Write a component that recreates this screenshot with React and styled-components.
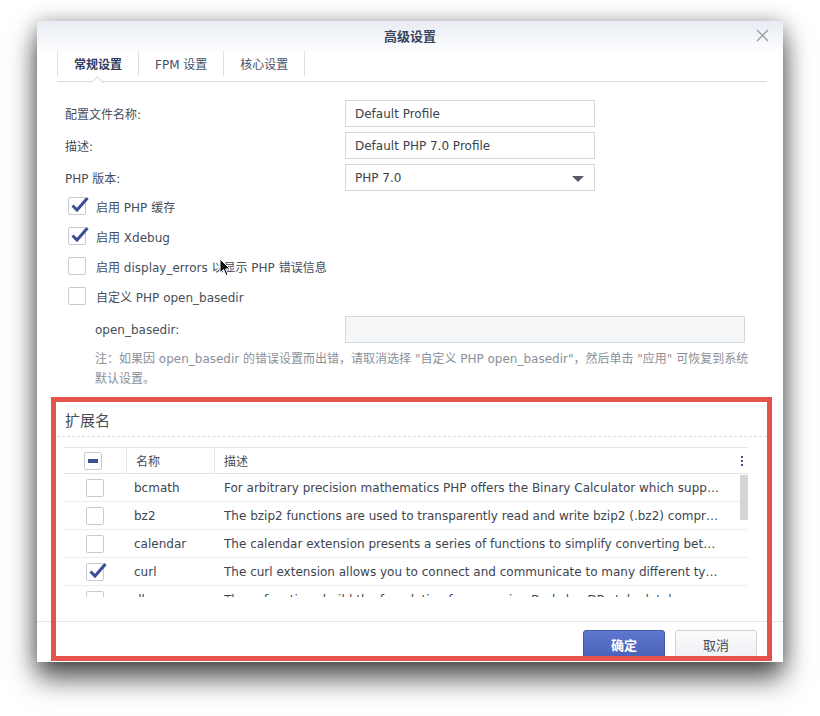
import React from "react";
import styled, { createGlobalStyle } from "styled-components";

const GlobalStyle = createGlobalStyle`
  html, body {
    margin: 0;
    padding: 0;
    background: #ffffff;
  }
  body {
    font-family: "DejaVu Sans", "Noto Sans CJK SC", sans-serif;
    font-size: 12px;
    color: #464e5c;
  }
`;

const Stage = styled.div`
  position: relative;
  width: 820px;
  height: 716px;
  overflow: hidden;
  padding: 21px 37px 0 37px;
  box-sizing: border-box;
`;

const Dialog = styled.div`
  width: 746px;
  height: 641px;
  background: #fff;
  display: flex;
  flex-direction: column;
  overflow: hidden;
  box-shadow: 0 16px 26px rgba(0, 0, 0, 0.68), 0 0 18px rgba(0, 0, 0, 0.25);
`;

const TitleBar = styled.div`
  position: relative;
  height: 29px;
  display: flex;
  align-items: center;
  justify-content: center;
  background: linear-gradient(#e8ecf3, #fbfcfd);
  font-size: 13px;
  font-weight: bold;
  color: #3a4560;
`;

const Close = styled.svg`
  position: absolute;
  right: 14px;
  top: 8px;
`;

const TabBar = styled.div`
  display: flex;
  height: 32px;
  margin: 0 16px 0 20px;
  border-bottom: 1px solid #d6dae1;
  align-items: flex-start;
  box-sizing: border-box;
`;

const Tab = styled.div`
  position: relative;
  height: 25px;
  margin-top: 1px;
  display: flex;
  align-items: center;
  padding: 0 ${p => p.$pad}px;
  border-left: 1px solid #dde0e5;
  font-weight: ${p => (p.$active ? "bold" : "normal")};
  color: ${p => (p.$active ? "#2f3b63" : "#47506a")};
  &:last-child {
    border-right: 1px solid #dde0e5;
  }
  ${p =>
    p.$active &&
    `
    &::after {
      content: "";
      position: absolute;
      left: 50%;
      bottom: -11px;
      width: 8px;
      height: 8px;
      margin-left: -5px;
      background: #fff;
      border-left: 1px solid #d6dae1;
      border-top: 1px solid #d6dae1;
      transform: rotate(45deg);
    }
  `}
`;

const Form = styled.div`
  padding: 18px 0 0 28px;
  display: flex;
  flex-direction: column;
`;

const FieldRow = styled.div`
  display: flex;
  align-items: center;
  height: 27px;
  margin-bottom: ${p => p.$mb ?? 5}px;
  margin-top: ${p => p.$mt ?? 0}px;
`;

const Label = styled.div`
  width: ${p => p.$w || 280}px;
  padding-left: ${p => p.$indent || 0}px;
  box-sizing: border-box;
`;

const Input = styled.div`
  width: ${p => p.$w || 250}px;
  height: 27px;
  box-sizing: border-box;
  border: 1px solid #d3d7de;
  background: ${p => (p.$disabled ? "#f5f6f8" : "#fff")};
  display: flex;
  align-items: center;
  padding: 0 9px;
  color: #3c424c;
  position: relative;
`;

const Caret = styled.div`
  position: absolute;
  right: 10px;
  top: 11px;
  width: 0;
  height: 0;
  border-left: 6px solid transparent;
  border-right: 6px solid transparent;
  border-top: 6px solid #555b66;
`;

const CheckRow = styled.label`
  display: flex;
  align-items: center;
  height: 30px;
  padding-left: 3px;
`;

const Box = styled.span`
  position: relative;
  display: inline-block;
  width: 18px;
  height: 18px;
  box-sizing: border-box;
  border: 1px solid #c6cbd3;
  border-radius: 2px;
  background: #fff;
  margin-right: ${p => p.$mr ?? 10}px;
  flex-shrink: 0;
  svg {
    position: absolute;
    left: 1px;
    top: -3px;
  }
`;

const Dash = styled.span`
  position: absolute;
  left: 3px;
  top: 6px;
  width: 10px;
  height: 4px;
  background: #3d4f93;
`;

const Note = styled.div`
  margin: 6px 0 0 30px;
  line-height: 20px;
  color: #8a9099;
  white-space: nowrap;
`;

const Section = styled.div`
  margin-top: 14px;
  padding: 0 16px 0 20px;
`;

const SectionTitle = styled.div`
  font-size: 15px;
  height: 33px;
  display: flex;
  align-items: center;
  padding-left: 8px;
  border-bottom: 1px dashed #d8dbe0;
`;

const Table = styled.div`
  margin: 10px 19px 0 7px;
`;

const Grid = styled.div`
  display: grid;
  grid-template-columns: 62px 88px 1fr 8px;
`;

const HeadRow = styled(Grid)`
  height: 27px;
  border-top: 1px solid #dfe3ea;
  border-bottom: 1px solid #dfe3ea;
  box-sizing: border-box;
`;

const HeadCell = styled.div`
  display: flex;
  align-items: center;
  padding-left: ${p => p.$pl ?? 9}px;
  border-left: ${p => (p.$sep ? "1px solid #e3e6eb" : "none")};
`;

const Body = styled.div`
  position: relative;
  height: 123px;
  overflow: hidden;
`;

const Row = styled(Grid)`
  height: 28px;
  border-bottom: 1px solid #eceef1;
  box-sizing: border-box;
`;

const Cell = styled.div`
  display: flex;
  align-items: center;
  padding-left: ${p => p.$pl ?? 10}px;
  color: #3e4450;
  white-space: nowrap;
  min-width: 0;
`;

const Scroll = styled.div`
  position: absolute;
  right: 0;
  top: 1px;
  width: 8px;
  height: 45px;
  background: #d4d4d4;
`;

const Spacer = styled.div`
  flex: 1;
`;

const Footer = styled.div`
  height: 41px;
  border-top: 1px solid #e2e5ea;
  display: flex;
  justify-content: flex-end;
  align-items: flex-start;
  gap: 10px;
  padding: 8px 26px 0 0;
  box-sizing: border-box;
`;

const Button = styled.div`
  width: 82px;
  height: 29px;
  box-sizing: border-box;
  border-radius: 3px;
  display: flex;
  align-items: center;
  justify-content: center;
  font-size: 13px;
  ${p =>
    p.$primary
      ? `
    background: linear-gradient(#5f78cf, #4961b9);
    border: 1px solid #3f57ad;
    color: #fff;
    font-weight: bold;
  `
      : `
    background: linear-gradient(#fbfbfc, #eef0f3);
    border: 1px solid #cdd1d8;
  `}
`;

const Highlight = styled.div`
  position: absolute;
  left: 51px;
  top: 397px;
  width: 721px;
  height: 264px;
  box-sizing: border-box;
  border: 5px solid #e6534c;
  pointer-events: none;
`;

const Cursor = styled.svg`
  position: absolute;
  left: 219px;
  top: 258px;
`;

const Check = () => (
  <svg width="20" height="20" viewBox="0 0 20 20">
    <path d="M2.5 10.5 L7 15 L17.5 3" fill="none" stroke="#3d4f93" strokeWidth="3" />
  </svg>
);

const extensions = [
  ["bcmath", "For arbitrary precision mathematics PHP offers the Binary Calculator which supp…", false],
  ["bz2", "The bzip2 functions are used to transparently read and write bzip2 (.bz2) compr…", false],
  ["calendar", "The calendar extension presents a series of functions to simplify converting bet…", false],
  ["curl", "The curl extension allows you to connect and communicate to many different ty…", true],
  ["dba", "These functions build the foundation for accessing Berkeley DB style databases.", false],
];

export default function App() {
  return (
    <>
      <GlobalStyle />
      <Stage>
        <Dialog>
          <TitleBar>
            高级设置
            <Close width="13" height="13" viewBox="0 0 13 13">
              <path d="M1 1 L12 12 M12 1 L1 12" stroke="#9aa0a9" strokeWidth="1.4" />
            </Close>
          </TitleBar>
          <TabBar>
            <Tab $active $pad={16}>常规设置</Tab>
            <Tab $pad={16}>FPM 设置</Tab>
            <Tab $pad={16}>核心设置</Tab>
          </TabBar>

          <Form>
            <FieldRow>
              <Label>配置文件名称:</Label>
              <Input>Default Profile</Input>
            </FieldRow>
            <FieldRow>
              <Label>描述:</Label>
              <Input>Default PHP 7.0 Profile</Input>
            </FieldRow>
            <FieldRow $mb={0}>
              <Label>PHP 版本:</Label>
              <Input>
                PHP 7.0
                <Caret />
              </Input>
            </FieldRow>
            <CheckRow>
              <Box><Check /></Box>启用 PHP 缓存
            </CheckRow>
            <CheckRow>
              <Box><Check /></Box>启用 Xdebug
            </CheckRow>
            <CheckRow>
              <Box />启用 display_errors 以显示 PHP 错误信息
            </CheckRow>
            <CheckRow>
              <Box />自定义 PHP open_basedir
            </CheckRow>
            <FieldRow $mb={0} $mt={5}>
              <Label $indent={30}>open_basedir:</Label>
              <Input $w={400} $disabled />
            </FieldRow>
            <Note>
              注：如果因 open_basedir 的错误设置而出错，请取消选择 "自定义 PHP open_basedir"，然后单击 "应用" 可恢复到系统
              <br />
              默认设置。
            </Note>
          </Form>

          <Section>
            <SectionTitle>扩展名</SectionTitle>
            <Table>
              <HeadRow>
                <HeadCell $pl={20}>
                  <Box $mr={0}><Dash /></Box>
                </HeadCell>
                <HeadCell $sep>名称</HeadCell>
                <HeadCell $sep>描述</HeadCell>
                <HeadCell $pl={0}>
                  <svg width="4" height="12" viewBox="0 0 4 12">
                    <rect x="1" y="1" width="2" height="2" fill="#3d4f93" />
                    <rect x="1" y="5" width="2" height="2" fill="#3d4f93" />
                    <rect x="1" y="9" width="2" height="2" fill="#3d4f93" />
                  </svg>
                </HeadCell>
              </HeadRow>
              <Body>
                {extensions.map(([name, desc, on]) => (
                  <Row key={name}>
                    <Cell $pl={22}>
                      <Box $mr={0}>{on && <Check />}</Box>
                    </Cell>
                    <Cell $pl={8}>{name}</Cell>
                    <Cell $pl={10}>{desc}</Cell>
                    <div />
                  </Row>
                ))}
                <Scroll />
              </Body>
            </Table>
          </Section>
          <Spacer />
          <Footer>
            <Button $primary>确定</Button>
            <Button>取消</Button>
          </Footer>
        </Dialog>

        <Highlight />
        <Cursor width="12" height="19" viewBox="0 0 12 19">
          <path d="M1 1 L1 15 L4.5 11.5 L7 17.5 L9 16.6 L6.6 11 L11 11 Z" fill="#111" stroke="#fff" strokeWidth="1" />
        </Cursor>
      </Stage>
    </>
  );
}
